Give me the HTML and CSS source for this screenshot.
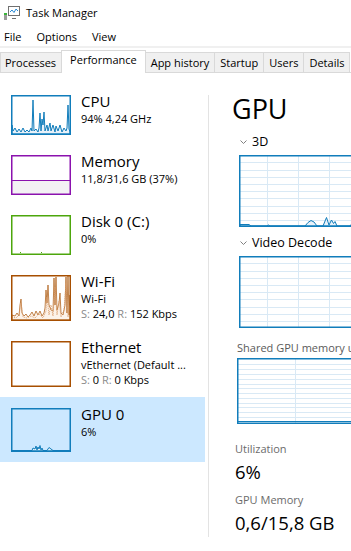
FILE: index.html
```html
<!DOCTYPE html>
<html lang="en">
<head>
  <meta charset="UTF-8" />
  <title>Task Manager</title>
  <link rel="stylesheet" href="styles.css">
</head>
<body>
  <div class="titlebar">
    <svg class="app-icon" width="16" height="14" viewBox="0 0 16 14">
      <rect x="0" y="7" width="3" height="7" fill="#9c9c9c"/>
      <rect x="0" y="7" width="3" height="2" fill="#3cb43c"/>
      <rect x="4.5" y="0.5" width="11" height="9" fill="#fff" stroke="#707070"/>
      <polyline points="6,6 8,4 10,6.5 12,3 14,5" fill="none" stroke="#2a8ad4"/>
      <path d="M8 12.5H12" stroke="#707070"/>
    </svg>
    <span>Task Manager</span>
  </div>

  <nav class="menubar">
    <span>File</span>
    <span>Options</span>
    <span>View</span>
  </nav>
  <div class="sep"></div>

  <div class="tabs">
    <div class="tab">Processes</div>
    <div class="tab active">Performance</div>
    <div class="tab">App history</div>
    <div class="tab">Startup</div>
    <div class="tab">Users</div>
    <div class="tab">Details</div>
  </div>

  <div class="main">
    <ul class="sidebar">
      <li class="item">
        <svg class="thumb" viewBox="0 0 60 40">
          <path class="data-blue" d="M1 39V30L2 36L4 33L6 37L8 34L10 37L12 33L14 37L16 35L18 37L20 33L21 36L22 5L23 36L25 34L27 37L28 33L29 18L30 36L31 24L32 30L33 17L34 36L36 30L37 36L39 28L40 36L42 30L44 37L45 31L47 36L49 30L51 37L53 33L55 36L56 33L57 10L58 34L59 37V39Z"/>
          <rect class="frame-blue" x=".75" y=".75" width="58.5" height="38.5"/>
        </svg>
        <div class="info">
          <div class="name">CPU</div>
          <div class="sub">94% 4,24 GHz</div>
        </div>
      </li>
      <li class="item">
        <svg class="thumb" viewBox="0 0 60 40">
          <rect x="1" y="25" width="58" height="14" fill="#f3f1f4"/>
          <path d="M1 25.5H59" stroke="#8b12ae"/>
          <rect class="frame-purple" x=".75" y=".75" width="58.5" height="38.5"/>
        </svg>
        <div class="info">
          <div class="name">Memory</div>
          <div class="sub">11,8/31,6 GB (37%)</div>
        </div>
      </li>
      <li class="item">
        <svg class="thumb" viewBox="0 0 60 40">
          <path d="M9 37.5H10M30 37.5H31" stroke="#4da60c"/>
          <rect class="frame-green" x=".75" y=".75" width="58.5" height="38.5"/>
        </svg>
        <div class="info">
          <div class="name">Disk 0 (C:)</div>
          <div class="sub">0%</div>
        </div>
      </li>
      <li class="item">
        <svg class="thumb tall" viewBox="0 0 60 46">
          <path class="data-brown" d="M1 45V40L4 41L6 38L8 41L9 30L10 24L11 38L13 41L15 39L17 42L19 40L21 37L23 41L25 36L27 40L29 36L31 41L33 38L34 33L35 15L36 28L37 10L38 30L40 35L42 36L43 3L44 30L45 2L46 35L48 28L49 18L50 38L52 40L54 30L55 2L56 38L57 1L58 40L59 20V45Z"/>
          <path class="dash-brown" d="M1 42L5 43L8 40L10 28L12 42L16 43L20 41L24 43L28 39L32 43L35 36L36 22L38 40L40 30L42 41L44 12L46 40L48 26L50 42L53 35L55 8L57 42L59 30"/>
          <rect class="frame-brown" x=".75" y=".75" width="58.5" height="44.5"/>
        </svg>
        <div class="info">
          <div class="name">Wi-Fi</div>
          <div class="sub">Wi-Fi</div>
          <div class="sub"><span class="dim">S:</span> 24,0 <span class="dim">R:</span> 152 Kbps</div>
        </div>
      </li>
      <li class="item">
        <svg class="thumb tall" viewBox="0 0 60 46">
          <rect class="frame-brown" x=".75" y=".75" width="58.5" height="44.5"/>
        </svg>
        <div class="info">
          <div class="name">Ethernet</div>
          <div class="sub">vEthernet (Default ...</div>
          <div class="sub"><span class="dim">S:</span> 0 <span class="dim">R:</span> 0 Kbps</div>
        </div>
      </li>
      <li class="item selected">
        <svg class="thumb gpu" viewBox="0 0 60 44">
          <path class="data-blue" d="M1 43V42.5H21L22 40L24 41L25 38L26 42L27 39L28 41L29 37.5L30 42L31 40L32 42.5H36L38 39.5L40 41L42 42.5H59V43Z"/>
          <rect class="frame-blue" x=".75" y=".75" width="58.5" height="42.5"/>
        </svg>
        <div class="info">
          <div class="name">GPU 0</div>
          <div class="sub">6%</div>
        </div>
      </li>
    </ul>

    <div class="divider"></div>

    <section class="detail">
      <h1 class="title">GPU</h1>

      <div class="sec">
        <svg class="chevron" width="7" height="4" viewBox="0 0 7 4"><polyline points="0.5,0.5 3.5,3.5 6.5,0.5"/></svg>
        <span>3D</span>
      </div>
      <svg class="graph" width="150" height="72" viewBox="0 0 150 72">
        <path class="grid" d="M1 7.5H150M1 15.5H150M1 22.5H150M1 29.5H150M1 36.5H150M1 43.5H150M1 51.5H150M1 58.5H150M1 65.5H150M28.5 1V71M59.5 1V71M90.5 1V71M121.5 1V71"/>
        <path class="data-blue" d="M1 71V69.5H10L12 71H28L29.5 70L31 71H66L69 67.5L72 65.5L75 67L78 71H84L87.5 62.5L90 70L92.5 65L94.5 68.5L96 66.5L98 71H111L113 68.5L116 68V71Z"/>
        <rect class="frame-blue" x=".75" y=".75" width="148.5" height="70.5"/>
      </svg>

      <div class="sec">
        <svg class="chevron" width="7" height="4" viewBox="0 0 7 4"><polyline points="0.5,0.5 3.5,3.5 6.5,0.5"/></svg>
        <span>Video Decode</span>
      </div>
      <svg class="graph" width="150" height="72" viewBox="0 0 150 72">
        <path class="grid" d="M1 7.5H150M1 15.5H150M1 22.5H150M1 29.5H150M1 36.5H150M1 43.5H150M1 51.5H150M1 58.5H150M1 65.5H150M28.5 1V71M59.5 1V71M90.5 1V71M121.5 1V71"/>
        <rect class="frame-blue" x=".75" y=".75" width="148.5" height="70.5"/>
      </svg>

      <div class="shared-label">Shared GPU memory usage</div>
      <svg class="shared-graph" width="150" height="66" viewBox="0 0 150 66">
        <path class="grid" d="M1 6.5H150M1 11.5H150M1 16.5H150M1 21.5H150M1 26.5H150M1 30.5H150M1 35.5H150M1 40.5H150M1 45.5H150M1 49.5H150M1 54.5H150M1 59.5H150M58.5 1V65"/>
        <path d="M1 63.5H150" stroke="#117dbb"/>
        <rect class="frame-blue" x=".75" y=".75" width="148.5" height="64.5"/>
      </svg>

      <div class="stat-label">Utilization</div>
      <div class="stat-value">6%</div>
      <div class="stat-label second">GPU Memory</div>
      <div class="stat-value">0,6/15,8 GB</div>
    </section>
  </div>
</body>
</html>
```

FILE: styles.css
```css
body {
  font-family: 'Open Sans', 'Noto Sans', sans-serif;
  font-size: 11px;
  color: #000;
  background-color: #fff;
  margin: 0;
  padding: 0;
  overflow: hidden;
}

.titlebar {
  height: 25px;
  line-height: 25px;
  display: flex;
  align-items: center;
  gap: 6px;
  padding-left: 4px;
}

.app-icon {
  display: block;
}

.menubar {
  height: 19px;
  line-height: 19px;
  padding: 2px 0 0 4px;
  display: flex;
  gap: 15px;
}

.sep {
  height: 2px;
  background-color: #f0f0f0;
}

.tabs {
  height: 24px;
  display: flex;
  align-items: flex-end;
  border-bottom: 1px solid #d9d9d9;
}

.tab {
  flex-shrink: 0;
  height: 19px;
  line-height: 19px;
  padding: 0 5px;
  background-color: #f0f0f0;
  border: 1px solid #d9d9d9;
  border-bottom: none;
  margin-left: -1px;
  white-space: nowrap;
}

.tab:first-child {
  margin-left: 0;
  padding: 0 5px 0 4px;
}

.tab.active {
  height: 18px;
  line-height: 18px;
  padding: 0 8px 4px;
  background-color: #fff;
  margin-bottom: -1px;
}

.main {
  display: flex;
}

.sidebar {
  list-style: none;
  margin: 0;
  padding: 12px 0 0;
  width: 205px;
  flex-shrink: 0;
}

.item {
  display: flex;
  gap: 10px;
  padding: 10px 0 10px 11px;
}

.item.selected {
  background-color: #cce8ff;
  padding-top: 11px;
}

.thumb {
  display: block;
  flex-shrink: 0;
  width: 60px;
  height: 40px;
}

.thumb.tall {
  height: 46px;
}

.thumb.gpu {
  height: 44px;
}

.info {
  margin-top: -4px;
  white-space: nowrap;
}

.name {
  font-size: 15px;
  line-height: 20px;
}

.sub {
  font-size: 11px;
  line-height: 15px;
}

.dim {
  color: #8a8a8a;
}

.frame-blue, .frame-purple, .frame-green, .frame-brown {
  fill: none;
  stroke-width: 1.5;
}

.frame-blue { stroke: #117dbb; }
.frame-purple { stroke: #8b12ae; }
.frame-green { stroke: #4da60c; }
.frame-brown { stroke: #a74f01; }

.data-blue {
  fill: #e8f1f9;
  stroke: #117dbb;
  stroke-width: 1;
}

.data-brown {
  fill: #fcf3ea;
  stroke: #b1641f;
  stroke-width: 0.8;
}

.dash-brown {
  fill: none;
  stroke: #dca070;
  stroke-width: 1;
  stroke-dasharray: 1 1;
}

.grid {
  fill: none;
  stroke: #d9e9f5;
  stroke-width: 1;
}

.divider {
  flex-shrink: 0;
  width: 1px;
  height: 442px;
  margin: 22px 0 0 3px;
  background-color: #e3e3e3;
}

.detail {
  flex: 1;
  min-width: 0;
  overflow: hidden;
  padding: 20px 0 0 23px;
}

.title {
  font-size: 27px;
  line-height: 32px;
  font-weight: 400;
  margin: 0;
}

.sec {
  display: flex;
  align-items: center;
  gap: 5px;
  margin: 8px 0 0 8px;
  font-size: 12.5px;
  line-height: 18px;
}

.graph + .sec {
  margin-top: 7px;
}

.chevron {
  display: block;
  fill: none;
  stroke: #808080;
}

.graph {
  display: block;
  margin: 4px 0 0 7px;
}

.shared-label {
  margin: 12px 0 0 5px;
  font-size: 11px;
  line-height: 16px;
  color: #5a5a5a;
  white-space: nowrap;
}

.shared-graph {
  display: block;
  margin: 2px 0 0 5px;
}

.stat-label {
  margin: 17px 0 0 3px;
  font-size: 11px;
  line-height: 16px;
  color: #6b6b6b;
}

.stat-label.second {
  margin-top: 8px;
}

.stat-value {
  margin: 3px 0 0 3px;
  font-size: 18.5px;
  line-height: 24px;
  white-space: nowrap;
}
```
